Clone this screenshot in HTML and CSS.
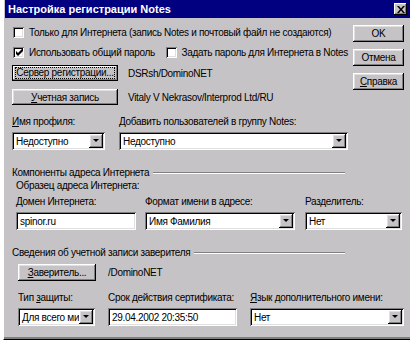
FILE: index.html
```html
<!DOCTYPE html>
<html lang="ru">
<head>
    <meta charset="UTF-8">
    <title>Настройка регистрации Notes</title>
    <link rel="stylesheet" href="styles.css">
</head>
<body>
    <div class="dialog">
        <!-- Title bar -->
        <div class="titlebar">
            <span class="title">Настройка регистрации Notes</span>
            <span class="close-btn">
                <svg width="8" height="7" viewBox="0 0 8 7"><path d="M0 0h2l2 2.5L6 0h2L5 3.5 8 7H6L4 4.5 2 7H0l3-3.5z" fill="#000"/></svg>
            </span>
        </div>

        <div class="dialog-body">
            <div class="top">
                <div class="top-main">
                    <div class="check-row">
                        <span class="checkbox"></span>
                        <span>Только для Интернета (запись Notes и почтовый файл не создаются)</span>
                    </div>
                    <div class="check-row">
                        <span class="checkbox">
                            <svg width="7" height="7" viewBox="0 0 7 7"><path d="M0 2v3l2 2 5-5V-1L2 4z" fill="#000"/></svg>
                        </span>
                        <span class="check-label">Использовать общий пароль</span>
                        <span class="checkbox"></span>
                        <span>Задать пароль для Интернета в Notes</span>
                    </div>
                    <div class="btn-row first">
                        <button class="btn wide default"><span class="focus">Сервер регистрации...</span></button>
                        <span class="value">DSRsh/DominoNET</span>
                    </div>
                    <div class="btn-row">
                        <button class="btn wide"><span><u>У</u>четная запись</span></button>
                        <span class="value">Vitaly V Nekrasov/Interprod Ltd/RU</span>
                    </div>
                    <div class="field-row">
                        <div class="field profile">
                            <span class="label"><u>И</u>мя профиля:</span>
                            <div class="combo"><span class="combo-text">Недоступно</span><span class="drop"></span></div>
                        </div>
                        <div class="field group-field">
                            <span class="label">Добавить пользователей в группу Notes:</span>
                            <div class="combo"><span class="combo-text">Недоступно</span><span class="drop"></span></div>
                        </div>
                    </div>
                </div>

                <div class="side-buttons">
                    <button class="btn side">OK</button>
                    <button class="btn side">Отмена</button>
                    <button class="btn side"><span><u>С</u>правка</span></button>
                </div>
            </div>

            <!-- Internet address -->
            <div class="group-title"><span>Компоненты адреса Интернета</span><span class="etch"></span></div>
            <div class="sample">Образец адреса Интернета:</div>
            <div class="field-row inet">
                <div class="field domain">
                    <span class="label">Домен Интернета:</span>
                    <div class="input">spinor.ru</div>
                </div>
                <div class="field format">
                    <span class="label">Формат имени в адресе:</span>
                    <div class="combo"><span class="combo-text">Имя Фамилия</span><span class="drop"></span></div>
                </div>
                <div class="field separator">
                    <span class="label">Разделитель:</span>
                    <div class="combo"><span class="combo-text">Нет</span><span class="drop"></span></div>
                </div>
            </div>

            <!-- Certifier -->
            <div class="group-title cert"><span>Сведения об учетной записи заверителя</span><span class="etch"></span></div>
            <div class="btn-row cert-row">
                <button class="btn certifier"><span><u>З</u>аверитель...</span></button>
                <span class="value">/DominoNET</span>
            </div>
            <div class="field-row cert-fields">
                <div class="field security">
                    <span class="label">Тип <u>з</u>ащиты:</span>
                    <div class="combo"><span class="combo-text">Для всего ми</span><span class="drop"></span></div>
                </div>
                <div class="field expiry">
                    <span class="label">Срок действия сертификата:</span>
                    <div class="input">29.04.2002 20:35:50</div>
                </div>
                <div class="field lang">
                    <span class="label"><u>Я</u>зык дополнительного имени:</span>
                    <div class="combo"><span class="combo-text">Нет</span><span class="drop"></span></div>
                </div>
            </div>
        </div>
    </div>
</body>
</html>
```

FILE: styles.css
```css
:root {
    --face: #c6c3c6;
    --light: #ffffff;
    --soft: #dfdfdf;
    --shadow: #808080;
    --dark: #000000;
    --title: #000080;
}

* {
    margin: 0;
    padding: 0;
    box-sizing: border-box;
}

body {
    background: #ffffff;
    font-family: "Liberation Sans", Arial, sans-serif;
    font-size: 10px;
    letter-spacing: -0.3px;
    color: #000;
    overflow: hidden;
    white-space: nowrap;
}

/* Window */
.dialog {
    margin-left: 3px;
    width: 407px;
    height: 340px;
    background: var(--face);
    border-left: 1px solid var(--light);
    border-bottom: 1px solid var(--dark);
    box-shadow: inset 0 -2px 0 var(--shadow);
    padding-left: 1px;
}

.titlebar {
    height: 18px;
    background: var(--title);
    display: flex;
    align-items: center;
    justify-content: space-between;
    padding: 0 3px 0 3px;
}

.title {
    color: #fff;
    font-weight: bold;
    font-size: 11px;
    letter-spacing: 0;
}

.close-btn {
    width: 13px;
    height: 12px;
    background: var(--face);
    box-shadow: inset -1px -1px var(--dark), inset 1px 1px var(--light), inset -2px -2px var(--shadow);
    display: flex;
    align-items: center;
    justify-content: center;
}

.dialog-body {
    padding: 0 6px 0 7px;
}

/* Top part with side buttons */
.top {
    display: flex;
    justify-content: space-between;
}

.top-main {
    width: 336px;
    padding-top: 7px;
}

.side-buttons {
    width: 51px;
    padding-top: 7px;
    display: flex;
    flex-direction: column;
    gap: 7px;
}

/* Buttons */
.btn {
    font: inherit;
    letter-spacing: inherit;
    color: #000;
    background: var(--face);
    border: none;
    height: 17px;
    flex-shrink: 0;
    box-shadow: inset -1px -1px var(--dark), inset 1px 1px var(--light), inset -2px -2px var(--shadow), inset 2px 2px var(--soft);
    display: flex;
    align-items: center;
    justify-content: center;
}

.btn.side {
    height: 17px;
    width: 51px;
}

.btn.wide {
    width: 106px;
    height: 16px;
}

.btn.default {
    box-shadow: inset 0 0 0 1px var(--dark), inset -2px -2px var(--shadow), inset 2px 2px var(--light);
}

.btn .focus {
    flex: 1;
    margin: 0 4px;
    outline: 1px dotted #000;
    line-height: 10px;
    text-align: center;
}

.btn.certifier {
    width: 78px;
    height: 17px;
}

/* Checkboxes */
.check-row {
    height: 14px;
    display: flex;
    align-items: center;
    gap: 5px;
    padding-left: 1px;
}

.check-row + .check-row {
    margin-top: 6px;
}

.check-label {
    width: 140px;
}

.checkbox {
    width: 11px;
    height: 11px;
    flex-shrink: 0;
    background: #fff;
    box-shadow: inset 1px 1px var(--shadow), inset -1px -1px var(--light), inset 2px 2px var(--dark), inset -2px -2px var(--soft);
    display: flex;
    align-items: center;
    justify-content: center;
    padding: 1px 0 0 1px;
}

/* Button rows */
.btn-row {
    display: flex;
    align-items: center;
    gap: 10px;
    margin-top: 8px;
}

.btn-row.first {
    margin-top: 6px;
}

/* Fields */
.field-row {
    display: flex;
    gap: 14px;
    margin-top: 10px;
}

.field {
    display: flex;
    flex-direction: column;
    gap: 4px;
    flex-shrink: 0;
}

.label {
    height: 13px;
    line-height: 13px;
}

.combo, .input {
    height: 18px;
    background: #fff;
    box-shadow: inset 1px 1px var(--shadow), inset -1px -1px var(--light), inset 2px 2px var(--dark), inset -2px -2px var(--soft);
    display: flex;
    align-items: center;
    padding: 2px;
}

.input {
    padding-left: 4px;
}

.combo-text {
    flex: 1;
    padding-left: 2px;
    overflow: hidden;
}

.drop {
    width: 14px;
    height: 14px;
    flex-shrink: 0;
    background: var(--face);
    box-shadow: inset -1px -1px var(--dark), inset 1px 1px var(--light), inset -2px -2px var(--shadow), inset 2px 2px var(--soft);
    position: relative;
}

.drop::after {
    content: "";
    position: absolute;
    left: 4px;
    top: 5px;
    border-left: 3px solid transparent;
    border-right: 3px solid transparent;
    border-top: 3px solid #000;
}

.profile { width: 93px; }
.group-field { width: 229px; }

/* Group headings */
.group-title {
    display: flex;
    align-items: center;
    gap: 4px;
    height: 13px;
    margin-top: 16px;
    width: 333px;
}

.etch {
    flex: 1;
    height: 2px;
    border-top: 1px solid var(--shadow);
    border-bottom: 1px solid var(--light);
}

.sample {
    height: 13px;
    line-height: 13px;
    padding-left: 4px;
}

.field-row.inet {
    margin-top: 3px;
    padding-left: 4px;
    gap: 9px;
}

.domain { width: 120px; }
.format { width: 150px; }
.separator { width: 97px; margin-left: 1px; }

.group-title.cert {
    margin-top: 16px;
}

.cert-row {
    margin-top: 5px;
    padding-left: 6px;
    gap: 12px;
}

.field-row.cert-fields {
    margin-top: 10px;
    padding-left: 6px;
    gap: 13px;
}

.security { width: 77px; }
.expiry { width: 129px; }
.lang { width: 154px; }
```
